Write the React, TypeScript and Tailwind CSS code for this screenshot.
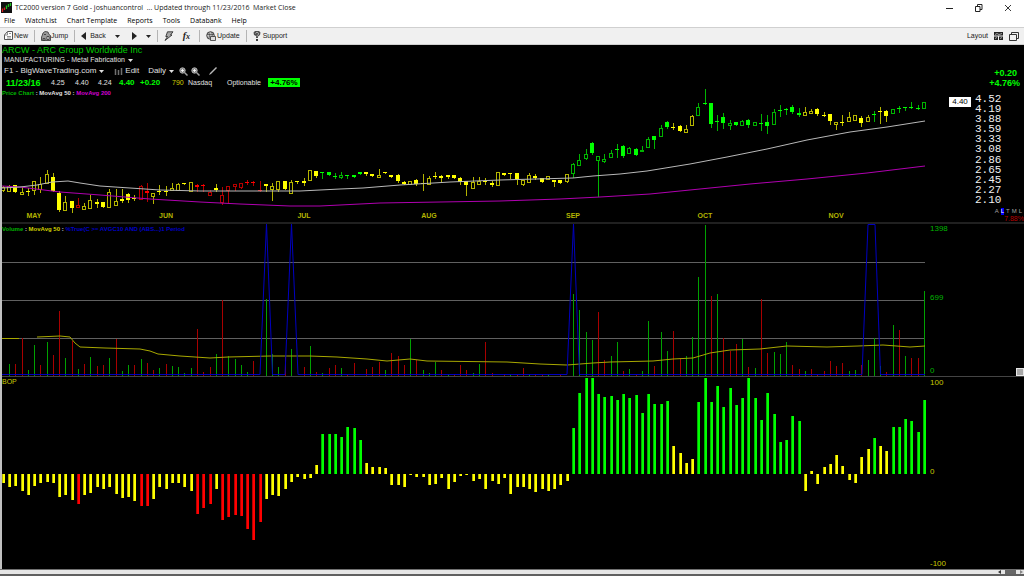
import React from "react";

type Candle = [string, number, number, number, number];

const PLOT_LEFT = 2;
const PLOT_WIDTH = 924;
const barX = (i: number) => Math.round(2.7 + i * 6.267);

// first letter: y/g/r colour, second letter: h = hollow, f = filled
// then high, body top, body bottom, low
const candles: Candle[] = [
  ["yh", 186, 187, 190, 192], ["yh", 185, 186, 191, 191], ["yf", 185, 185, 192, 192], ["yh", 187, 192, 194, 195],
  ["yf", 188, 191, 192, 195], ["yh", 181, 181, 190, 195], ["yh", 177, 184, 189, 193], ["yh", 170, 174, 183, 183],
  ["yf", 173, 177, 191, 191], ["yf", 191, 193, 210, 211], ["yh", 196, 202, 210, 210], ["yf", 201, 201, 208, 212],
  ["rh", 198, 205, 207, 208], ["yh", 203, 206, 209, 209], ["yh", 195, 200, 208, 208], ["yf", 199, 202, 204, 207],
  ["yf", 202, 202, 207, 207], ["yh", 189, 192, 207, 207], ["yh", 189, 201, 205, 205], ["yf", 189, 199, 201, 202],
  ["yf", 193, 194, 200, 202], ["yf", 195, 198, 199, 200], ["rh", 185, 186, 199, 199], ["rf", 183, 191, 193, 201],
  ["yh", 193, 193, 196, 204], ["yf", 185, 191, 192, 194], ["yf", 186, 191, 192, 195], ["yh", 183, 188, 190, 190],
  ["yh", 183, 184, 190, 190], ["yf", 183, 183, 184, 184], ["yh", 182, 182, 191, 191], ["rf", 184, 185, 187, 191],
  ["rf", 184, 185, 186, 191], ["rh", 190, 192, 195, 195], ["yf", 184, 188, 190, 191], ["rh", 187, 195, 202, 205],
  ["rh", 186, 186, 190, 204], ["rh", 184, 184, 186, 191], ["rh", 183, 183, 187, 189], ["rf", 180, 182, 183, 184],
  ["rf", 181, 182, 183, 185], ["rf", 181, 190, 191, 191], ["yf", 184, 184, 186, 191], ["yh", 183, 186, 189, 201],
  ["yh", 181, 181, 189, 192], ["yf", 181, 181, 189, 189], ["yh", 180, 182, 193, 194], ["yf", 181, 181, 182, 183],
  ["yf", 178, 181, 183, 185], ["yh", 170, 170, 180, 181], ["yf", 171, 171, 176, 177], ["gf", 172, 172, 173, 178],
  ["gf", 172, 172, 175, 175], ["gf", 173, 176, 177, 178], ["gh", 172, 175, 177, 179], ["gf", 175, 175, 176, 178],
  ["gf", 175, 175, 177, 177], ["gf", 172, 172, 174, 174], ["yf", 172, 172, 174, 175], ["yf", 174, 174, 176, 176],
  ["yh", 169, 175, 177, 177], ["yf", 172, 172, 173, 173], ["yf", 175, 175, 177, 177], ["yf", 174, 175, 181, 182],
  ["yf", 181, 182, 184, 184], ["yh", 181, 181, 184, 184], ["yf", 179, 180, 184, 185], ["yf", 174, 183, 184, 190],
  ["yh", 176, 178, 184, 184], ["yf", 172, 176, 177, 178], ["yf", 175, 176, 178, 181], ["yf", 175, 175, 177, 178],
  ["yf", 175, 175, 178, 178], ["yf", 177, 178, 182, 184], ["yf", 181, 181, 185, 195], ["yh", 177, 182, 188, 188],
  ["yh", 177, 181, 184, 184], ["yf", 178, 181, 182, 184], ["yf", 181, 183, 185, 186], ["yh", 172, 172, 185, 185],
  ["yf", 173, 173, 175, 175], ["yf", 173, 173, 174, 178], ["yf", 173, 173, 179, 184], ["yh", 180, 180, 184, 186],
  ["yh", 173, 175, 182, 182], ["yf", 174, 176, 178, 179], ["yf", 178, 178, 182, 182], ["yh", 176, 176, 179, 179],
  ["yf", 180, 180, 182, 186], ["yf", 180, 180, 183, 183], ["yh", 174, 174, 181, 183], ["gh", 163, 164, 173, 178],
  ["gh", 154, 160, 165, 166], ["gh", 149, 154, 158, 160], ["gf", 142, 143, 153, 154], ["gh", 156, 156, 160, 197],
  ["gh", 154, 159, 161, 163], ["gh", 150, 153, 157, 157], ["gf", 144, 149, 150, 157], ["gf", 145, 146, 156, 157],
  ["gh", 147, 148, 153, 154], ["gf", 148, 149, 155, 155], ["gh", 146, 150, 151, 151], ["gh", 137, 139, 147, 148],
  ["gf", 136, 136, 140, 148], ["gh", 125, 128, 136, 137], ["gf", 121, 122, 127, 128], ["yf", 123, 127, 128, 129],
  ["yf", 125, 126, 131, 131], ["yh", 125, 129, 132, 132], ["yh", 115, 116, 125, 126], ["gh", 103, 107, 115, 115],
  ["gf", 89, 103, 104, 104], ["gf", 103, 103, 124, 127], ["gf", 115, 121, 122, 130], ["gf", 113, 117, 123, 128],
  ["gh", 120, 123, 125, 130], ["gf", 122, 122, 125, 125], ["gh", 120, 121, 125, 126], ["gf", 119, 120, 125, 127],
  ["gh", 122, 122, 125, 125], ["gf", 114, 123, 124, 130], ["gf", 115, 122, 126, 133], ["gh", 109, 112, 124, 124],
  ["gf", 105, 110, 111, 116], ["gf", 108, 109, 110, 114], ["gf", 105, 107, 112, 113], ["gf", 108, 113, 115, 116],
  ["yh", 107, 112, 115, 115], ["yh", 109, 111, 113, 113], ["yf", 108, 109, 114, 115], ["yf", 112, 115, 116, 116],
  ["yf", 114, 114, 121, 124], ["yh", 122, 122, 124, 130], ["yf", 115, 122, 123, 125], ["yh", 112, 117, 121, 122],
  ["yh", 115, 115, 120, 121], ["yf", 116, 118, 123, 126], ["yh", 115, 117, 121, 121], ["gf", 111, 114, 115, 121],
  ["yf", 107, 111, 112, 123], ["yf", 110, 111, 116, 121], ["gh", 109, 109, 113, 113], ["gf", 106, 108, 109, 112],
  ["gf", 107, 107, 108, 110], ["gf", 102, 107, 108, 108], ["gf", 105, 108, 109, 109], ["gh", 102, 102, 108, 108],
];

// positive = up volume (green), negative = down volume (red)
const volume: number[] = [
  0, 12, -12, -38, 6, 31, -11, 34, -21, -65, 18, -35, 7, -12, 19, -10, -11, 18, -37, 5,
  11, -11, 17, -13, -6, 8, -12, 10, 9, 3, 8, -47, -4, -9, 22, -76, 20, 17, 11, 4,
  -15, 0, 77, 22, 9, -19, 27, 0, -9, 30, -4, 3, -8, -11, 8, -1, -13, 0, -7, -9,
  -14, 6, -23, -20, -11, 37, -16, 6, 3, 14, -6, 1, -1, -11, -6, 3, 12, -34, -3, 0,
  -1, 1, -1, -8, 1, -1, -1, 1, 0, -1, 0, 82, 66, 44, 36, -64, -16, 20, 34, -5,
  7, -1, 5, 55, -10, 44, 25, -45, -18, 20, 39, 99, 151, -80, 82, -38, -25, -32, 37, -9,
  8, -77, -23, 24, 22, 34, -11, -7, 5, -7, -2, -5, -15, -10, -13, 5, 6, -11, 16, 38,
  10, -4, 51, -46, 20, -18, -18, 85,
];

const bop: number[] = [
  -9, -13, -12, -17, -21, -12, -9, -8, -9, -23, -21, -26, -30, -21, -19, -13, -15, -13, -20, -24,
  -23, -27, -32, -32, -25, -13, -15, -9, -9, -13, -17, -40, -34, -30, -15, -46, -43, -41, -42, -55,
  -66, -48, -25, -21, -22, -15, -8, -3, -5, -4, 9, 40, 40, 40, 37, 47, 46, 34, 11, 7,
  7, 6, -11, -11, -13, -1, -3, -3, -11, -10, -4, -15, -8, -2, -1, -7, -5, -15, -7, -10,
  -4, -20, -13, -13, -15, -18, -15, -17, -15, -11, -7, 46, 81, 96, 96, 80, 77, 78, 74, 80,
  76, 79, 61, 80, 70, 70, 73, 28, 21, 11, 15, 72, 96, 72, 88, 67, 86, 69, 76, 96,
  76, 54, 81, 60, 32, 34, 58, 53, -17, 3, -10, 7, 10, 19, 8, -6, -9, 17, 25, 36,
  28, 23, 47, 47, 55, 53, 42, 74,
];

const months = [
  { label: "MAY", bar: 5 },
  { label: "JUN", bar: 26 },
  { label: "JUL", bar: 48 },
  { label: "AUG", bar: 68 },
  { label: "SEP", bar: 91 },
  { label: "OCT", bar: 112 },
  { label: "NOV", bar: 133 },
];

const priceScale = ["4.52", "4.19", "3.88", "3.59", "3.33", "3.08", "2.86", "2.65", "2.45", "2.27", "2.10"];

const menus = ["File", "WatchList", "Chart Template", "Reports", "Tools", "Databank", "Help"];

const solid: Record<string, string> = { y: "#ffff00", g: "#00ff00", r: "#ff0000" };
const dim: Record<string, string> = { y: "#b4b400", g: "#00b400", r: "#b40000" };

const bopColor = (v: number) => {
  if (v >= 30) return "g";
  if (v <= -28) return "r";
  return "y";
};

const CandleMark = ({ candle, index }: { candle: Candle; index: number }) => {
  const [kind, high, top, bottom, low] = candle;
  const x = barX(index);
  const filled = kind[1] === "f";
  const line = dim[kind[0]];
  return (
    <g>
      {filled ? (
        <>
          <rect x={x} y={high} width={1} height={low - high + 1} fill={line} />
          <rect x={x - 2} y={top} width={4} height={bottom - top} fill={solid[kind[0]]} />
        </>
      ) : (
        <>
          {top > high && <rect x={x} y={high} width={1} height={top - high} fill={line} />}
          {low > bottom && <rect x={x} y={bottom} width={1} height={low - bottom} fill={line} />}
          <rect x={x - 1.5} y={top + 0.5} width={3} height={bottom - top} fill="none" stroke={line} />
        </>
      )}
    </g>
  );
};

const Plot = ({ top, height, children }: { top: number; height: number; children: React.ReactNode }) => (
  <svg
    className="absolute inset-0 size-full"
    viewBox={`${PLOT_LEFT} ${top} ${PLOT_WIDTH} ${height}`}
    preserveAspectRatio="none"
    aria-hidden="true"
  >
    {children}
  </svg>
);

const PricePlot = () => (
  <Plot top={45} height={177}>
    {candles.map((c, i) => (
      <CandleMark key={i} candle={c} index={i} />
    ))}
    <polyline
      fill="none"
      stroke="#b000b0"
      points="2,186 20,187 60,192 100,195 150,199 200,202 240,204 290,206 320,206 340,205 380,203 440,202 500,201 560,199 600,197 650,194 690,190 750,184 807,179 867,173 925,166"
    />
    <polyline
      fill="none"
      stroke="#b8b8b8"
      points="2,188 20,187 37,185 52,182 68,181 80,183 100,186 130,188 160,190 200,191 250,191 300,191 340,189 363,188 400,185 450,182 500,180 573,178 593,176 620,174 647,171 690,164 727,157 767,149 807,140 850,132 887,127 925,121"
    />
  </Plot>
);

const VolumePlot = () => (
  <Plot top={224} height={152}>
    {[262, 300, 338].map((y) => (
      <rect key={y} x={2} y={y} width={923} height={1} fill="#606060" />
    ))}
    {volume.map((v, i) => (
      <rect
        key={i}
        x={barX(i)}
        y={376 - Math.abs(v)}
        width={1}
        height={Math.abs(v)}
        fill={v > 0 ? "#00a000" : "#a80000"}
      />
    ))}
    <g fill="none" stroke="#a8a800">
      <polyline points="2,338.5 19,338.5" />
      <polyline points="37,337 60,336 70,337 75,343 80,347 105,348 140,349 150,351 158,354 180,356 195,357 210,358 228,357 270,356 310,356 337,357 367,359 387,361 410,359 427,361 507,362 540,364 567,365 593,363 610,362 653,361 673,359 693,358 710,353 730,350 760,349 787,346 827,347 858,346 883,345 910,347 925,346" />
    </g>
    <polyline
      fill="none"
      stroke="#0000c0"
      points="2,374.5 260,374.5 266.5,224 272.5,374.5 285,374.5 291.5,224 298,374.5 567,374.5 573.5,224 579.5,374.5 862,374.5 868,224.5 875,224.5 880.5,374.5 925,374.5"
    />
  </Plot>
);

const BopPlot = () => (
  <Plot top={377} height={192}>
    {bop.map((v, i) => {
      const color = bopColor(v);
      const y = v > 0 ? 474 - v : 474;
      return (
        <g key={i}>
          <rect x={barX(i) - 1} y={y} width={3} height={Math.abs(v)} fill={dim[color]} />
          <rect x={barX(i)} y={y} width={2} height={Math.abs(v)} fill={solid[color]} />
        </g>
      );
    })}
  </Plot>
);

const Caret = ({ className = "" }: { className?: string }) => (
  <svg viewBox="0 0 5 3" className={`w-[5px] h-[3px] shrink-0 ${className}`} aria-hidden="true">
    <path d="M0 0h5L2.5 3z" fill="currentColor" />
  </svg>
);

const Separator = () => <span className="w-px h-3 bg-[#b4b4b4] shrink-0" />;

const NewIcon = () => (
  <svg viewBox="0 0 9 10" className="w-[9px] h-[10px]" aria-hidden="true">
    <path d="M3.5.5h5v8h-8V4z" fill="#fff" stroke="#555" />
    <path d="M3.5.5V4h-3M3 5.5h4M3 7h4M5 2.5h2" fill="none" stroke="#777" strokeWidth=".8" />
  </svg>
);

const JumpIcon = () => (
  <svg viewBox="0 0 10 10" className="w-[10px] h-[10px]" aria-hidden="true">
    <path d="M1 5l1-3 2-1.500 3 .5 1 2.500 1.500 1v5H.5V6z" fill="#9a9a9a" stroke="#333" strokeWidth=".8" />
    <path d="M2 7.500h2V9H2zM6 5.500h2v3H6zM3 3.500h2" fill="#eee" stroke="#222" strokeWidth=".7" />
  </svg>
);

const BoltIcon = () => (
  <svg viewBox="0 0 10 10" className="w-[10px] h-[10px]" aria-hidden="true">
    <path d="M3.500.8H9L6.500 4H8L1 9.500 3.500 5.500H1.800z" fill="#a8a8a8" stroke="#222" strokeWidth=".8" />
  </svg>
);

const UpdateIcon = () => (
  <svg viewBox="0 0 10 10" className="w-[10px] h-[10px]" aria-hidden="true">
    <circle cx="4.500" cy="4.500" r="3.800" fill="#c4c4c4" stroke="#333" strokeWidth=".9" />
    <path d="M1 3.500h7M2.500 1.500c1.500 2 1.500 4 0 6M5.500 1c1 2 1 3 .5 4" fill="none" stroke="#444" strokeWidth=".7" />
    <path d="M4.500 5.500h5v4h-5z" fill="#ddd" stroke="#333" strokeWidth=".8" />
  </svg>
);

const SupportIcon = () => (
  <svg viewBox="0 0 8 10" className="w-2 h-[10px]" aria-hidden="true">
    <path d="M.5 1.500L2 0h4l1.500 1.500L7 4 5 5.500V7H3V5L1 4z" fill="#505050" />
    <path d="M2.500 2.500C3 1 5.500 1 5.500 2.700 5.500 4 4 4 4 5.500" fill="none" stroke="#d0d0d0" strokeWidth=".8" />
    <path d="M3 8h2v2H3z" fill="#3a3a3a" />
  </svg>
);

const MagnifierIcon = () => (
  <svg viewBox="0 0 9 9" className="w-[9px] h-[9px]" aria-hidden="true">
    <circle cx="3.500" cy="3.500" r="2.700" fill="#888" stroke="#b0b0b0" />
    <path d="M2 3.500h3M3.500 2v3" stroke="#fff" strokeWidth=".8" />
    <path d="M5.500 5.500L8.500 8.500" stroke="#a0a0a0" strokeWidth="1.500" />
  </svg>
);

const TitleBar = () => (
  <header className="flex items-center h-[15px] pl-px pr-3 bg-white leading-[14px] text-[#222]">
    <svg viewBox="0 0 11 11" className="w-[11px] h-[11px] mr-[3px]" aria-hidden="true">
      <path d="M0 0h11v11H0z" fill="#101010" />
      <path d="M1.500 10V6.500M3.500 8V5.500" stroke="#e02020" strokeWidth="1.300" />
      <path d="M5.500 7V3.500M7.500 5V2M9.500 4V1" stroke="#20c020" strokeWidth="1.300" />
    </svg>
    <h1 className="grow whitespace-pre">TC2000 version 7 Gold - joshuancontrol  ... Updated through 11/23/2016  Market Close</h1>
    <div className="flex items-center gap-[21px]">
      <button aria-label="Minimize">
        <svg viewBox="0 0 8 8" className="size-2"><path d="M0 4.500h7" stroke="#222" /></svg>
      </button>
      <button aria-label="Restore">
        <svg viewBox="0 0 8 8" className="size-2">
          <path d="M.5 2.500h4.500v5H.5zM2.500 2.500v-2h4.500v5H5" fill="none" stroke="#222" />
        </svg>
      </button>
      <button aria-label="Close">
        <svg viewBox="0 0 8 8" className="size-2"><path d="M1 1l6 6M7 1L1 7" stroke="#222" strokeWidth=".9" /></svg>
      </button>
    </div>
  </header>
);

const MenuBar = () => (
  <nav className="flex items-center gap-[10px] h-3 pl-1 bg-white leading-3 text-black">
    {menus.map((item) => (
      <button key={item}>{item}</button>
    ))}
  </nav>
);

const Toolbar = () => (
  <div className="flex items-center h-[18px] pl-1 pr-[5px] bg-[#f0f0f0] border-y border-[#d0d0d0] leading-3 text-[#222] font-['Liberation_Sans',sans-serif]">
    <div className="flex items-center gap-[6px] grow">
      <button className="flex items-center gap-px"><NewIcon />New</button>
      <Separator />
      <button className="flex items-center"><JumpIcon />Jump</button>
      <Separator />
      <button className="flex items-center gap-1">
        <svg viewBox="0 0 5 8" className="w-[5px] h-2" aria-hidden="true"><path d="M5 0v8L0 4z" fill="#222" /></svg>
        Back
      </button>
      <button aria-label="Back history" className="px-[3px]"><Caret /></button>
      <button aria-label="Forward" className="px-[3px]">
        <svg viewBox="0 0 5 8" className="w-[5px] h-2"><path d="M0 0v8l5-4z" fill="#222" /></svg>
      </button>
      <button aria-label="Forward history"><Caret /></button>
      <Separator />
      <button aria-label="Alerts"><BoltIcon /></button>
      <button className="px-[3px] text-[10px] italic font-bold font-['Liberation_Serif',serif]">
        f<span className="text-[8px]">x</span>
      </button>
      <Separator />
      <button className="flex items-center gap-px"><UpdateIcon />Update</button>
      <Separator />
      <button className="flex items-center gap-[2px]"><SupportIcon />Support</button>
    </div>
    <div className="flex items-center gap-[6px]">
      <button>Layout</button>
      <button aria-label="Layout grid">
        <svg viewBox="0 0 9 8" className="w-[9px] h-2">
          <path d="M0 0h9v3.500H0zM0 4.500h4V8H0zM5 4.500h4V8H5z" fill="#222" />
          <path d="M1 2.500l2-1 2 1 3-1M1 6.500l2-1M6 6.500l2-1" fill="none" stroke="#ddd" strokeWidth=".7" />
        </svg>
      </button>
      <button aria-label="Windows">
        <svg viewBox="0 0 10 9" className="w-[10px] h-[9px]">
          <path d="M2.500 2.500v-2h7v6h-2M.5 2.500h7v6h-7z" fill="none" stroke="#333" />
        </svg>
      </button>
    </div>
  </div>
);

const SymbolHeader = () => (
  <div className="absolute top-0 left-0 leading-[10px] whitespace-nowrap text-[#e0e0e0]">
    <h2 className="text-[9px] text-[#00c800]">ARCW - ARC Group Worldwide Inc</h2>
    <button className="flex items-center gap-[3px] pl-[2px]">
      MANUFACTURING - Metal Fabrication <Caret />
    </button>
    <div className="flex items-center h-3 pl-[2px] text-[8px]">
      <button className="flex items-center gap-[3px]">F1 - BigWaveTrading.com <Caret /></button>
      <button className="flex items-center gap-[2px] ml-[10px]">
        <svg viewBox="0 0 9 7" className="w-[9px] h-[7px]" aria-hidden="true">
          <path d="M1.500 1v6M4.500 2v5M7.500 0v7" stroke="#707070" strokeWidth="1.500" />
        </svg>
        Edit
      </button>
      <button className="flex items-center gap-[3px] ml-[9px]">Daily <Caret /></button>
      <button aria-label="Zoom in" className="ml-[5px]"><MagnifierIcon /></button>
      <button aria-label="Zoom out" className="ml-[3px]"><MagnifierIcon /></button>
      <button aria-label="Draw" className="ml-[9px]">
        <svg viewBox="0 0 8 8" className="size-2"><path d="M0 8l1-2L7 0l1 1-6 6z" fill="#b8b8b8" /></svg>
      </button>
    </div>
    <div className="flex items-center h-[11px] pl-1">
      <span className="w-[45px] text-[9px] font-bold text-[#00ff00]">11/23/16</span>
      <span className="w-6">4.25</span>
      <span className="w-[23px]">4.40</span>
      <span className="w-[21px]">4.24</span>
      <span className="w-[21px] text-[8px] font-bold text-[#00ff00]">4.40</span>
      <span className="w-8 text-[8px] font-bold text-[#00ff00]">+0.20</span>
      <span className="w-4 text-[#d0d000]">790</span>
      <span className="w-[39px]">Nasdaq</span>
      <span className="w-[41px]">Optionable</span>
      <span className="w-8 h-[9px] leading-[9px] text-[8px] text-center font-bold bg-[#00ff00] text-black">+4.76%</span>
    </div>
    <p className="text-[6px] font-bold">
      <span className="text-[#00b400]">Price Chart</span> : MovAvg 50 : <span className="text-[#d000d0]">MovAvg 200</span>
    </p>
  </div>
);

const PriceAxis = () => (
  <aside className="w-[98px] shrink-0 flex flex-col pt-[23px] text-right text-[9px] leading-[10px]">
    <p className="pr-[7px] font-bold text-[#00ff00]">+0.20</p>
    <p className="pr-1 font-bold text-[#00ff00]">+4.76%</p>
    <div className="flex items-start gap-1 pl-[23px] pt-[6px] pb-[3px] grow">
      <span className="w-[22px] mt-[3px] bg-white text-[8px] text-black text-center">4.40</span>
      <ul className="self-stretch flex flex-col justify-between text-[11px] text-[#f0f0f0] font-['Liberation_Mono',monospace]">
        {priceScale.map((p) => (
          <li key={p}>{p}</li>
        ))}
      </ul>
    </div>
    <div className="text-[6px] leading-[7px]">
      <p className="flex justify-end gap-[2px] pr-[2px] text-[#a0a0a0]">
        <span>A</span>
        <span className="bg-[#0000ff] text-white">L</span>
        <span>T</span>
        <span>M</span>
        <span>L</span>
      </p>
      <p className="text-[7px] text-[#b80000]">7.88%</p>
    </div>
  </aside>
);

const App: React.FC = () => {
  return (
    <div className="flex flex-col h-screen bg-white text-[7px] font-['Open_Sans',sans-serif]">
      <TitleBar />
      <MenuBar />
      <Toolbar />
      <main className="flex flex-col grow border-l-2 border-[#c0c0c0] bg-black font-['Liberation_Sans',sans-serif]">
        <section className="flex flex-[177_1_0px] border-b-2 border-b-[#202020]">
          <div className="relative grow">
            <PricePlot />
            <SymbolHeader />
            {months.map((m) => (
              <span
                key={m.label}
                className="absolute bottom-px -translate-x-1/2 text-[7px] leading-[10px] font-bold text-[#b4b400]"
                style={{ left: `${((barX(m.bar) - PLOT_LEFT) / PLOT_WIDTH) * 100}%` }}
              >
                {m.label}
              </span>
            ))}
          </div>
          <PriceAxis />
        </section>
        <section className="flex flex-[152_1_0px] border-b border-b-[#444444]">
          <div className="relative grow">
            <VolumePlot />
            <p className="absolute top-0 left-0 text-[6px] leading-[10px] font-bold whitespace-nowrap text-[#e0e0e0]">
              <span className="text-[#00b400]">Volume</span> : <span className="text-[#d0d000]">MovAvg 50</span> :{" "}
              <span className="text-[#0000c8]">%True(C &gt;= AVGC10 AND (ABS...)1 Period</span>
            </p>
          </div>
          <aside className="w-[98px] shrink-0 flex justify-between pl-1 text-[8px] leading-[10px] text-[#00b400]">
            <div className="flex flex-col justify-between">
              <span>1398</span>
              <span className="pb-1">699</span>
              <span>0</span>
            </div>
            <button aria-label="Resize pane" className="self-end size-2 bg-[#a8a8a8] border border-[#e8e8e8]" />
          </aside>
        </section>
        <section className="flex flex-[192_1_0px]">
          <div className="relative grow">
            <BopPlot />
            <p className="absolute top-0 left-0 text-[7px] leading-[10px] text-[#c8c800]">BOP</p>
          </div>
          <aside className="w-[98px] shrink-0 flex flex-col justify-between pl-1 pt-px text-[8px] leading-[10px] text-[#c8c800]">
            <span>100</span>
            <span className="pb-1">0</span>
            <span>-100</span>
          </aside>
        </section>
      </main>
      <footer className="flex justify-end items-center gap-1 h-[7px] pr-px bg-[#e6e6e6] border-t border-t-[#707070] border-b-2 border-b-[#606060]">
        <button aria-label="Scroll left">
          <svg viewBox="0 0 3 4" className="w-[3px] h-1"><path d="M3 0v4L0 2z" fill="#333" /></svg>
        </button>
        <span className="w-[11px] h-1 bg-[#686868]" />
        <button aria-label="Scroll right">
          <svg viewBox="0 0 3 4" className="w-[3px] h-1"><path d="M0 0v4l3-2z" fill="#888" /></svg>
        </button>
      </footer>
    </div>
  );
};

export default App;
